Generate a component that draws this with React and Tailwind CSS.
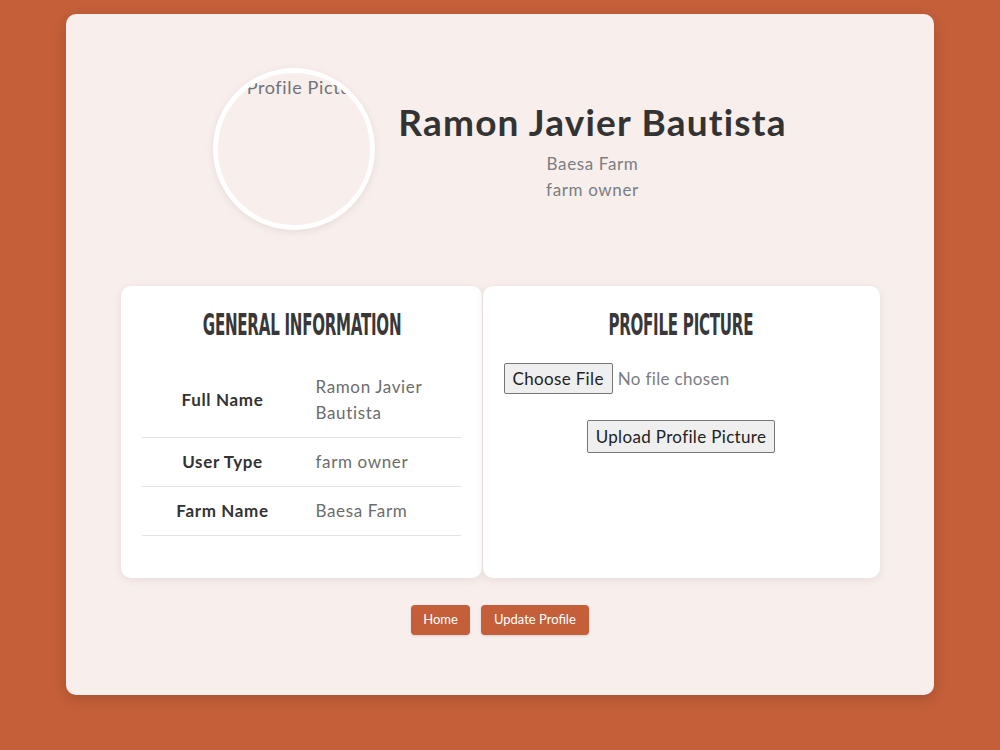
export default function App() {
  const info = [
    { label: 'Full Name', value: 'Ramon Javier Bautista' },
    { label: 'User Type', value: 'farm owner' },
    { label: 'Farm Name', value: 'Baesa Farm' },
  ]

  return (
    <div className="min-h-screen w-full bg-[#c45f39] pt-[14px] pb-[55px] font-['Lato','Open_Sans',sans-serif] tracking-[0.04em] text-[#333]">
      <div className="mx-auto w-[868px] h-[681px] rounded-[10px] bg-[#f8eeeb] shadow-[0_4px_14px_rgba(0,0,0,0.15)] pt-[54px]">

        {/* header: avatar + name */}
        <div className="flex items-center justify-center gap-[23px]">
          <div className="w-[162px] h-[162px] rounded-full border-[5px] border-white bg-[#f8eeeb] shadow-[0_2px_8px_rgba(0,0,0,0.08)] overflow-hidden">
            <p className="text-center text-[18px] text-[#6f737a] leading-none mt-[5px] ml-[26px] whitespace-nowrap">Profile Picture</p>
          </div>
          <div className="flex flex-col items-center">
            <h1 className="mt-[4px] text-[37px] font-bold text-[#333] leading-tight tracking-[1.2px]">Ramon Javier Bautista</h1>
            <p className="text-[17px] text-[#7b7d82] mt-[5px] leading-[26px]">Baesa Farm</p>
            <p className="text-[17px] text-[#7b7d82] leading-[26px]">farm owner</p>
          </div>
        </div>

        {/* panels */}
        <div className="flex justify-center gap-[1px] mt-[56px]">
          <div className="w-[361px] h-[292px] bg-white rounded-[10px] shadow-[0_2px_10px_rgba(0,0,0,0.08)] px-[21px] pt-[24px]">
            <div className="text-center whitespace-nowrap">
              <h2 className="inline-block uppercase font-['DejaVu_Sans_Condensed',sans-serif] font-bold text-[27px] leading-[30px] tracking-[-0.4px] text-[#383838] scale-x-[0.62] scale-y-110">General Information</h2>
            </div>
            <table className="w-full mt-[23px] text-[17px]">
              <tbody>
                {info.map(row => (
                  <tr key={row.label} className="border-b border-[#e3e3e3]">
                    <td className="w-[162px] text-center font-bold text-[#333] py-[11px]">{row.label}</td>
                    <td className="text-[#6c6c6c] leading-[26px] py-[11px] pl-[12px] pr-[24px]">{row.value}</td>
                  </tr>
                ))}
              </tbody>
            </table>
          </div>

          <div className="w-[397px] h-[292px] bg-white rounded-[10px] shadow-[0_2px_10px_rgba(0,0,0,0.08)] px-[21px] pt-[24px]">
            <div className="text-center whitespace-nowrap">
              <h2 className="inline-block uppercase font-['DejaVu_Sans_Condensed',sans-serif] font-bold text-[27px] leading-[30px] tracking-[-0.4px] text-[#383838] scale-x-[0.62] scale-y-110">Profile Picture</h2>
            </div>
            <input
              type="file"
              className="block mt-[23px] text-[17px] leading-[23px] tracking-[0.02em] text-[#7b7d82] file:text-[#222] file:bg-[#efefef] file:border file:border-[#767676] file:rounded-[2px] file:px-[8px] file:py-[3px] file:mr-[5px]"
            />
            <div className="flex justify-center mt-[26px]">
              <button className="bg-[#efefef] border border-[#767676] rounded-[2px] px-[8px] py-[4px] leading-[23px] tracking-[0.02em] text-[17px] text-[#222]">
                Upload Profile Picture
              </button>
            </div>
          </div>
        </div>

        {/* actions */}
        <div className="flex justify-center gap-[11px] mt-[27px]">
          <button className="bg-[#c45f39] text-white text-[13px] tracking-normal rounded-[4px] px-[12px] h-[30px] shadow-sm">Home</button>
          <button className="bg-[#c45f39] text-white text-[13px] tracking-normal rounded-[4px] px-[13px] h-[30px] shadow-sm">Update Profile</button>
        </div>
      </div>
    </div>
  )
}
